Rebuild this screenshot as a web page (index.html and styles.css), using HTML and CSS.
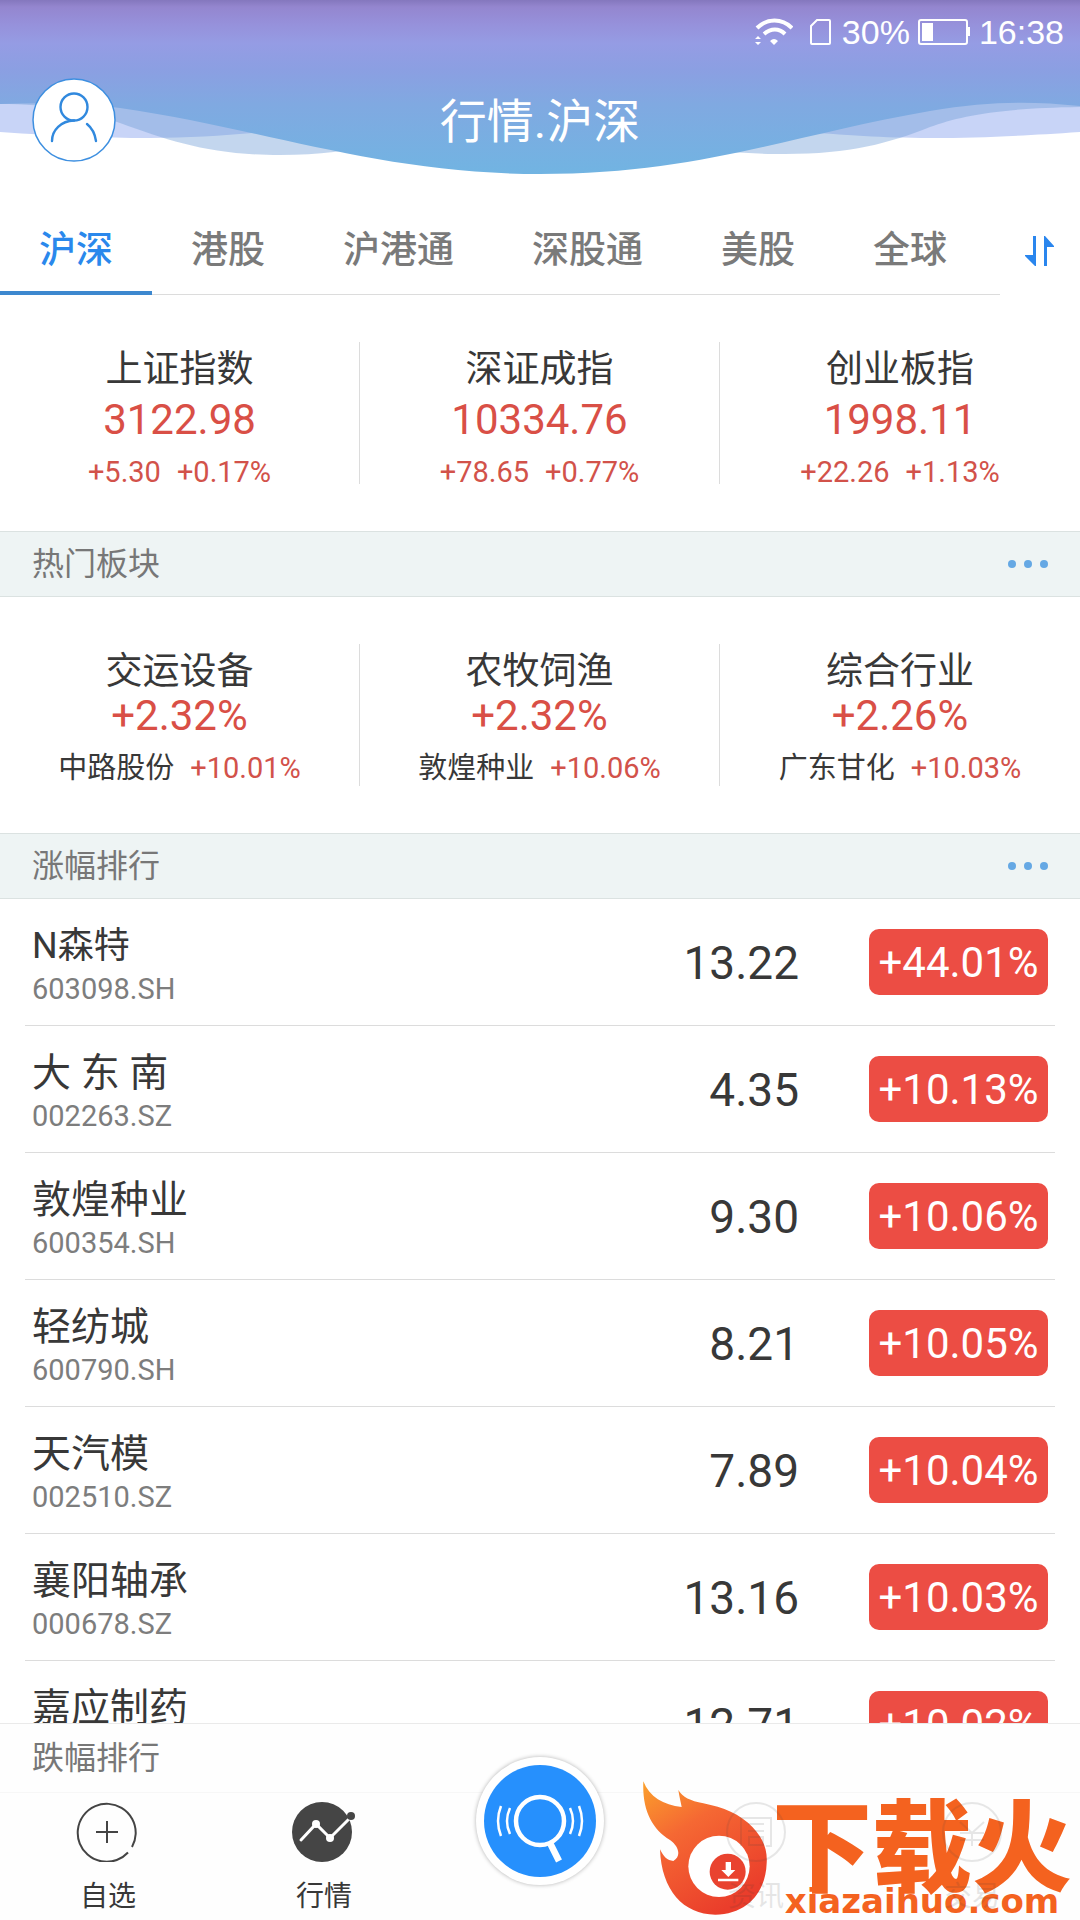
FILE: index.html
```html
<!DOCTYPE html>
<html lang="zh-CN">
  <head>
    <meta charset="UTF-8" />
    <meta name="viewport" content="width=device-width, initial-scale=1.0" />
    <title>行情.沪深</title>
    <link rel="stylesheet" href="styles.css">
  </head>
  <body>
    <!-- Header -->
    <header class="header">
      <svg class="waves" viewBox="0 0 1080 174" preserveAspectRatio="none" aria-hidden="true">
        <defs>
          <linearGradient id="sky" x1="0" y1="0" x2="0" y2="1">
            <stop offset="0" stop-color="#8477bd" />
            <stop offset="0.04" stop-color="#9486cf" />
            <stop offset="0.14" stop-color="#9691db" />
            <stop offset="0.25" stop-color="#959ce4" />
            <stop offset="0.4" stop-color="#8b9fe2" />
            <stop offset="0.6" stop-color="#80a9e1" />
            <stop offset="1" stop-color="#71b4e2" />
          </linearGradient>
        </defs>
        <path fill="#c8d4f7" d="M0 90V132C60 136 100 138 150 138C200 138 240 134 290 130L290 90ZM1080 90V132C1020 136 980 138 930 138C880 138 850 135 790 131L800 90Z" />
        <path fill="#6f9dd6" fill-opacity="0.42" d="M0 104C50 104 85 111 120 123C170 141 210 155 280 155C320 155 350 150 380 145L380 90L0 90ZM1080 107C1000 108 960 116 930 127C890 143 850 154 785 154C745 154 720 151 690 148L700 90L1080 90Z" />
        <path fill="url(#sky)" d="M0 0H1080V106C1030 101 990 101 930 111C790 135 700 174 540 174C380 174 270 130 120 108C80 102 40 103 0 104Z" />
      </svg>

      <div class="status-bar">
        <svg class="wifi" width="38" height="30" viewBox="0 0 38 30" aria-hidden="true">
          <path d="M2 11C12 1 27 1 37 11M9 17C16 11 24 11 30 17" fill="none" stroke="#fff" stroke-width="4" />
          <path d="M15 24Q19 20 23 24L19 28ZM0 22L3 19L6 22ZM0 25L3 28L6 25Z" fill="#fff" />
        </svg>
        <svg class="sim" width="23" height="28" viewBox="0 0 23 28" aria-hidden="true">
          <path d="M8 2H20Q21 2 21 3V25Q21 26 20 26H3Q2 26 2 25V8Z" fill="none" stroke="#fff" stroke-width="2" />
        </svg>
        <span>30%</span>
        <svg class="battery" width="53" height="28" viewBox="0 0 53 28" aria-hidden="true">
          <rect x="1" y="2" width="48" height="24" rx="2" fill="none" stroke="#fff" stroke-width="2" />
          <path d="M4 5H15V23H4ZM49 9H52V18H49Z" fill="#fff" />
        </svg>
        <span>16:38</span>
      </div>

      <div class="title-bar">
        <button type="button" class="avatar" aria-label="我的">
          <svg width="84" height="84" viewBox="0 0 84 84" aria-hidden="true">
            <circle cx="42" cy="42" r="41" fill="#fff" stroke="#3d8fe0" stroke-width="1.5" />
            <g fill="none" stroke="#3189de" stroke-width="2.4" stroke-linecap="round">
              <circle cx="42" cy="29" r="13.5" />
              <path d="M42 42.500C29 43 20 52 20 63M55 46C60 50 63 56 64 63" />
            </g>
          </svg>
        </button>
        <h1 class="title">行情.沪深</h1>
      </div>
    </header>

    <!-- Market tabs -->
    <nav class="tabs">
      <div class="tab-list">
        <a href="#hs" class="tab active">沪深</a>
        <a href="#hk" class="tab">港股</a>
        <a href="#hgt" class="tab">沪港通</a>
        <a href="#sgt" class="tab">深股通</a>
        <a href="#us" class="tab">美股</a>
        <a href="#global" class="tab">全球</a>
      </div>
      <button type="button" class="sort" aria-label="排序">
        <svg width="30" height="30" viewBox="0 0 30 30" aria-hidden="true">
          <path fill="#2a86ee" d="M8 0H11V30H10L0 20V19H8ZM19 0H20L29 10V11H22V30H19Z" />
        </svg>
      </button>
    </nav>

    <!-- Indices -->
    <section class="panel">
      <div class="quote">
        <div class="quote-name">上证指数</div>
        <div class="quote-value">3122.98</div>
        <div class="quote-sub"><span>+5.30</span><span>+0.17%</span></div>
      </div>
      <div class="quote">
        <div class="quote-name">深证成指</div>
        <div class="quote-value">10334.76</div>
        <div class="quote-sub"><span>+78.65</span><span>+0.77%</span></div>
      </div>
      <div class="quote">
        <div class="quote-name">创业板指</div>
        <div class="quote-value">1998.11</div>
        <div class="quote-sub"><span>+22.26</span><span>+1.13%</span></div>
      </div>
    </section>

    <!-- Hot sectors -->
    <div class="section-bar">
      <h2>热门板块</h2>
      <button type="button" class="more" aria-label="更多热门板块"><i></i><i></i><i></i></button>
    </div>
    <section class="panel sectors">
      <div class="quote">
        <div class="quote-name">交运设备</div>
        <div class="quote-value">+2.32%</div>
        <div class="quote-sub"><span class="leader">中路股份</span><span>+10.01%</span></div>
      </div>
      <div class="quote">
        <div class="quote-name">农牧饲渔</div>
        <div class="quote-value">+2.32%</div>
        <div class="quote-sub"><span class="leader">敦煌种业</span><span>+10.06%</span></div>
      </div>
      <div class="quote">
        <div class="quote-name">综合行业</div>
        <div class="quote-value">+2.26%</div>
        <div class="quote-sub"><span class="leader">广东甘化</span><span>+10.03%</span></div>
      </div>
    </section>

    <!-- Top gainers -->
    <div class="section-bar">
      <h2>涨幅排行</h2>
      <button type="button" class="more" aria-label="更多涨幅排行"><i></i><i></i><i></i></button>
    </div>
    <main class="ranking">
      <table class="stocks">
        <tbody>
          <tr>
            <td class="stock"><div class="stock-name small">N森特</div><div class="stock-code">603098.SH</div></td>
            <td class="price">13.22</td>
            <td class="change"><span class="pill">+44.01%</span></td>
          </tr>
          <tr>
            <td class="stock"><div class="stock-name">大 东 南</div><div class="stock-code">002263.SZ</div></td>
            <td class="price">4.35</td>
            <td class="change"><span class="pill">+10.13%</span></td>
          </tr>
          <tr>
            <td class="stock"><div class="stock-name">敦煌种业</div><div class="stock-code">600354.SH</div></td>
            <td class="price">9.30</td>
            <td class="change"><span class="pill">+10.06%</span></td>
          </tr>
          <tr>
            <td class="stock"><div class="stock-name">轻纺城</div><div class="stock-code">600790.SH</div></td>
            <td class="price">8.21</td>
            <td class="change"><span class="pill">+10.05%</span></td>
          </tr>
          <tr>
            <td class="stock"><div class="stock-name">天汽模</div><div class="stock-code">002510.SZ</div></td>
            <td class="price">7.89</td>
            <td class="change"><span class="pill">+10.04%</span></td>
          </tr>
          <tr>
            <td class="stock"><div class="stock-name">襄阳轴承</div><div class="stock-code">000678.SZ</div></td>
            <td class="price">13.16</td>
            <td class="change"><span class="pill">+10.03%</span></td>
          </tr>
          <tr>
            <td class="stock"><div class="stock-name">嘉应制药</div></td>
            <td class="price">12.71</td>
            <td class="change"><span class="pill">+10.02%</span></td>
          </tr>
        </tbody>
      </table>
    </main>

    <!-- Bottom area -->
    <footer class="footer">
      <h2 class="losers">跌幅排行</h2>
      <nav class="bottom-nav">
        <a href="#watchlist" class="nav-item">
          <svg width="64" height="60" viewBox="0 0 64 60" fill="none" stroke="#444" stroke-width="2" aria-hidden="true">
            <path d="M52 50.500A29 29 0 1 1 56 45M20 30H42M31 19V41" />
          </svg>
          <span>自选</span>
        </a>
        <a href="#market" class="nav-item">
          <svg width="64" height="60" viewBox="0 0 64 60" aria-hidden="true">
            <circle cx="30" cy="30" r="30" fill="#454545" />
            <path d="M9 38L24 22L38 36L57 17" fill="none" stroke="#fff" stroke-width="3" stroke-linecap="round" />
            <circle cx="24" cy="22" r="4" fill="#fff" />
            <circle cx="38" cy="36" r="4" fill="#fff" />
            <circle cx="59" cy="14" r="4" fill="#454545" />
          </svg>
          <span>行情</span>
        </a>
        <button type="button" class="search" aria-label="搜索">
          <svg width="112" height="112" viewBox="0 0 112 112" fill="none" stroke="#fff" aria-hidden="true">
            <circle cx="56" cy="56" r="56" fill="#2690fd" stroke="none" />
            <circle cx="56" cy="56" r="24" stroke-width="4.500" />
            <path d="M66 78L75 96" stroke-width="6.500" />
            <path d="M17 41Q11 56 17 71M26 43Q20 56 26 69M86 43Q92 56 86 69M95 41Q101 56 95 71" stroke-width="2.500" />
          </svg>
        </button>
        <a href="#news" class="nav-item faded">
          <svg width="60" height="60" viewBox="0 0 60 60" fill="none" stroke="#444" stroke-width="2" aria-hidden="true">
            <circle cx="30" cy="30" r="29" />
            <path d="M15 44V16H45V44H40M22 22H38M22 29H38M23 35H37V43H23Z" />
          </svg>
          <span>资讯</span>
        </a>
        <a href="#trade" class="nav-item faded">
          <svg width="60" height="60" viewBox="0 0 60 60" fill="none" stroke="#444" stroke-width="2" aria-hidden="true">
            <circle cx="30" cy="30" r="29" />
            <path d="M18 20L30 31L42 20M30 31V44M18 31H42M18 38H42" />
          </svg>
          <span>交易</span>
        </a>
      </nav>
    </footer>

    <!-- Download site mark -->
    <div class="watermark">
      <svg width="132" height="138" viewBox="60 360 396 414" aria-hidden="true">
        <defs>
          <linearGradient id="flame" x1="0" y1="0" x2="0.6" y2="1">
            <stop offset="0" stop-color="#fba02c" />
            <stop offset="0.4" stop-color="#f56833" />
            <stop offset="1" stop-color="#ea3d2b" />
          </linearGradient>
        </defs>
        <path fill="url(#flame)" d="M70 364C88 410 130 436 185 441C182 425 178 410 175 390C188 412 210 422 250 430C310 442 360 462 398 502C430 536 443 570 440 610C437 700 378 764 286 764C190 764 124 690 120 568C130 590 142 602 160 603C184 590 178 560 150 540C96 508 66 450 70 364Z" />
        <ellipse cx="297" cy="619" rx="92" ry="92" fill="#fff" />
        <circle cx="323" cy="635" r="54" fill="#e9432f" />
        <path fill="#fff" d="M317 606H333V630H346L325 651L304 630H317ZM294 656H355V664H294Z" />
      </svg>
      <div class="watermark-text">
        <span class="brand">下载火</span>
        <span class="domain">xiazaihuo.com</span>
      </div>
    </div>
  </body>
</html>
```
FILE: styles.css
```css
/* General Styles */
* {
  box-sizing: border-box;
}

body {
  position: relative;
  display: flex;
  flex-direction: column;
  height: 100vh;
  margin: 0;
  overflow: hidden;
  background-color: #ffffff;
  color: #383838;
  font-family: Roboto, "Noto Sans CJK SC", sans-serif;
}

h1,
h2 {
  margin: 0;
  font-weight: 400;
}

a {
  color: inherit;
  text-decoration: none;
}

button {
  padding: 0;
  border: none;
  background: none;
  cursor: pointer;
}

svg {
  display: block;
  flex: none;
}

/* Header */
.header {
  position: relative;
  flex: none;
  padding-bottom: 12px;
  color: #ffffff;
}

.waves {
  position: absolute;
  top: 0;
  left: 0;
  width: 100%;
  height: 100%;
}

.status-bar {
  position: relative;
  display: flex;
  align-items: center;
  justify-content: flex-end;
  height: 64px;
  padding-right: 16px;
  font-family: "Liberation Sans", sans-serif;
  font-size: 34px;
}

.sim {
  margin: 0 10px 0 16px;
}

.battery {
  margin: 0 8px;
}

.title-bar {
  position: relative;
  display: grid;
  grid-template-columns: 84px 1fr 84px;
  align-items: center;
  padding: 14px 32px 0;
}

.title {
  padding-top: 4px;
  font-size: 47px;
  line-height: 80px;
  text-align: center;
}

/* Market tabs */
.tabs {
  display: flex;
  flex: none;
  padding-top: 33px;
}

.tab-list {
  display: flex;
  flex: 1;
  border-bottom: 1px solid #dcdcdc;
}

.tab {
  margin-bottom: -1px;
  padding: 4px 39px 0;
  border-bottom: 4px solid transparent;
  color: #7a7a7a;
  font-size: 37px;
  font-weight: 500;
  line-height: 80px;
}

.tab.active {
  border-bottom-color: #3d88cf;
  color: #2a88ec;
}

.sort {
  display: flex;
  align-items: center;
  justify-content: center;
  width: 80px;
}

/* Three-column quotes */
.panel {
  display: grid;
  flex: none;
  grid-template-columns: repeat(3, 1fr);
  padding: 47px 0;
}

.quote {
  min-height: 142px;
  border-right: 1px solid #dcdcdc;
  text-align: center;
}

.quote:last-child {
  border-right: none;
}

.quote-name {
  padding-top: 4px;
  font-size: 37px;
  line-height: 48px;
}

.quote-value {
  color: #d94f46;
  font-size: 42px;
  line-height: 52px;
}

.quote-sub {
  display: flex;
  justify-content: center;
  gap: 16px;
  margin-top: 14px;
  color: #d2524a;
  font-size: 29px;
  line-height: 24px;
}

.sectors .quote-value {
  line-height: 40px;
}

.sectors .quote-sub {
  margin-top: 20px;
}

.leader {
  color: #383838;
}

/* Section bars */
.section-bar {
  display: flex;
  flex: none;
  align-items: center;
  justify-content: space-between;
  height: 66px;
  padding: 0 32px;
  border-top: 1px solid #dbe2e1;
  border-bottom: 1px solid #dbe2e1;
  background-color: #eef4f4;
}

.section-bar h2,
.losers {
  color: #777777;
  font-size: 32px;
  line-height: 64px;
}

.more {
  display: flex;
  gap: 8px;
}

.more i {
  width: 8px;
  height: 8px;
  border-radius: 50%;
  background-color: #65a8e4;
}

/* Ranking */
.ranking {
  flex: 1;
  min-height: 0;
  padding: 0 25px;
  overflow: hidden;
}

.stocks {
  width: 100%;
  border-collapse: separate;
  border-spacing: 0;
}

.stocks td {
  height: 127px;
  padding: 0;
  border-bottom: 1px solid #dcdcdc;
}

.stocks .stock {
  padding: 22px 0 0 7px;
  vertical-align: top;
}

.stock-name {
  font-size: 39px;
  line-height: 50px;
}

.stock-name.small {
  font-size: 36px;
}

.stock-code {
  color: #7d7d7d;
  font-size: 29px;
  line-height: 36px;
}

.stocks .price {
  padding-top: 2px;
  font-size: 46px;
  text-align: right;
}

.stocks .change {
  width: 256px;
  padding-right: 7px;
}

.pill {
  display: block;
  width: 179px;
  margin-left: auto;
  padding-top: 2px;
  border-radius: 10px;
  background-color: #ec4d44;
  color: #ffffff;
  font-size: 42px;
  line-height: 64px;
  text-align: center;
}

/* Bottom area */
.footer {
  flex: none;
  border-top: 1px solid #eaeaea;
  background-color: #fefefe;
}

.losers {
  padding: 2px 32px;
}

.bottom-nav {
  display: grid;
  grid-template-columns: repeat(5, 1fr);
  height: 128px;
  border-top: 1px solid #f7f7f7;
}

.nav-item {
  display: flex;
  flex-direction: column;
  align-items: center;
  gap: 15px;
  padding-top: 9px;
  font-size: 28px;
  line-height: 40px;
}

.nav-item.faded {
  z-index: 2;
  opacity: 0.12;
}

.search {
  justify-self: center;
  align-self: start;
  margin-top: -36px;
  padding: 8px;
  border-radius: 50%;
  background-color: #ffffff;
  box-shadow: 0 0 4px rgba(0, 0, 0, 0.3);
}

/* Download site mark */
.watermark {
  position: absolute;
  right: 8px;
  bottom: 2px;
  z-index: 1;
  display: flex;
  align-items: flex-end;
  color: #f4621f;
  pointer-events: none;
}

.watermark-text {
  display: flex;
  flex-direction: column;
  align-items: center;
}

.brand {
  font-size: 100px;
  font-weight: 900;
  line-height: 68px;
}

.domain {
  font-family: "DejaVu Sans", sans-serif;
  font-size: 34px;
  font-weight: 700;
  line-height: 34px;
}
```
